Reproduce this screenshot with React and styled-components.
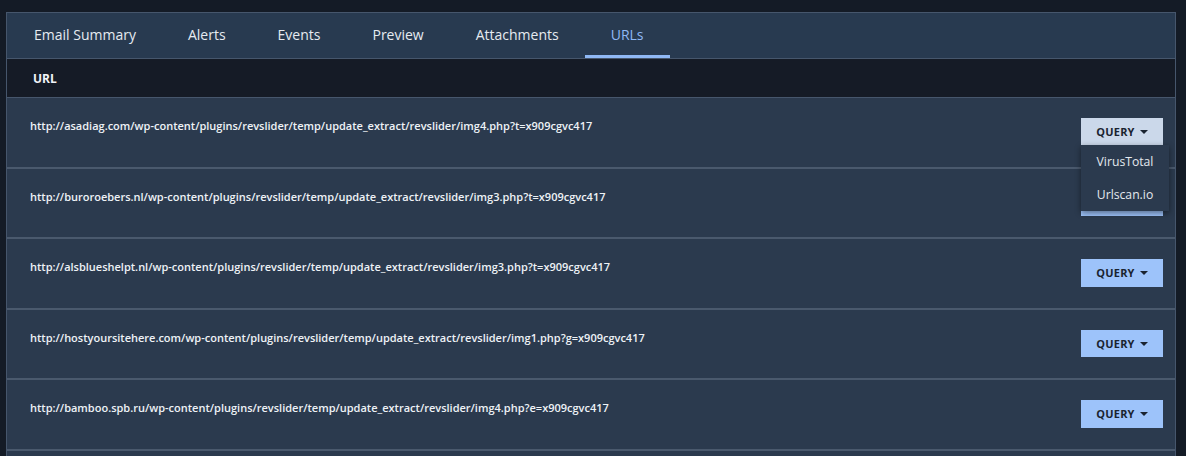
import React from "react";
import { createGlobalStyle, styled } from "styled-components";

const GlobalStyle = createGlobalStyle`
  html, body {
    margin: 0;
    padding: 0;
    background: #141b26;
    font-family: "Open Sans", "Liberation Sans", sans-serif;
    overflow: hidden;
  }
`;

const Page = styled.div`
  padding: 12px 10px 0 6px;
  height: 456px;
  box-sizing: border-box;
`;

const Panel = styled.div`
  border: 1px solid #46566c;
  border-bottom: none;
  background: #2b3a4e;
`;

const TabBar = styled.div`
  display: flex;
  height: 45px;
  padding-left: 1px;
  background: #283a50;
  border-bottom: 1px solid #46566c;
`;

const Tab = styled.div`
  padding: 0 26px;
  display: flex;
  align-items: center;
  font-size: 14px;
  color: ${({ $active }) => ($active ? "#8fb8f5" : "#e6ebf1")};
  border-bottom: 3px solid ${({ $active }) => ($active ? "#8fb8f5" : "transparent")};
  padding-top: 1px;
  box-sizing: border-box;
  height: 45px;
`;

const HeaderRow = styled.div`
  height: 38px;
  display: flex;
  align-items: center;
  padding-left: 26px;
  background: #151b26;
  border-bottom: 1px solid #46566c;
  font-size: 12px;
  font-weight: 700;
  color: #f1f4f8;
`;

const Row = styled.div`
  position: relative;
  height: 68.5px;
  display: flex;
  align-items: flex-start;
  justify-content: space-between;
  padding: 0 12px 0 23px;
  border-bottom: 2px solid #4a596d;
`;

const UrlText = styled.div`
  font-size: 11px;
  font-weight: 600;
  color: #eef2f6;
  padding-top: 20px;
`;

const QueryButton = styled.div`
  margin-top: 20px;
  width: 82px;
  height: 27.5px;
  display: flex;
  align-items: center;
  justify-content: center;
  gap: 5px;
  background: ${({ $open }) => ($open ? "#cbd8ea" : "#9dc3fa")};
  color: #1a2330;
  font-size: 11px;
  font-weight: 700;
  letter-spacing: 0.2px;
`;

const Caret = styled.span`
  width: 0;
  height: 0;
  border-left: 4px solid transparent;
  border-right: 4px solid transparent;
  border-top: 4px solid #1a2330;
  margin-top: 1px;
`;

const Menu = styled.div`
  position: absolute;
  top: 47px;
  right: 6px;
  width: 88px;
  background: #2b3a4e;
  box-shadow: 0 2px 6px rgba(0, 0, 0, 0.45);
  z-index: 2;
`;

const MenuItem = styled.div`
  height: 33px;
  display: flex;
  align-items: center;
  justify-content: center;
  font-size: 12.2px;
  color: #e4e9ef;
`;

const tabs = ["Email Summary", "Alerts", "Events", "Preview", "Attachments", "URLs"];

const urls = [
  "http://asadiag.com/wp-content/plugins/revslider/temp/update_extract/revslider/img4.php?t=x909cgvc417",
  "http://buroroebers.nl/wp-content/plugins/revslider/temp/update_extract/revslider/img3.php?t=x909cgvc417",
  "http://alsblueshelpt.nl/wp-content/plugins/revslider/temp/update_extract/revslider/img3.php?t=x909cgvc417",
  "http://hostyoursitehere.com/wp-content/plugins/revslider/temp/update_extract/revslider/img1.php?g=x909cgvc417",
  "http://bamboo.spb.ru/wp-content/plugins/revslider/temp/update_extract/revslider/img4.php?e=x909cgvc417",
  "",
];

const App = () => {
  return (
    <>
      <GlobalStyle />
      <Page>
        <Panel>
          <TabBar>
            {tabs.map((t) => (
              <Tab key={t} $active={t === "URLs"}>
                {t}
              </Tab>
            ))}
          </TabBar>
          <HeaderRow>URL</HeaderRow>
          {urls.map((u, idx) => (
            <Row key={idx}>
              <UrlText>{u}</UrlText>
              {u && (
                <QueryButton $open={idx === 0}>
                  QUERY <Caret />
                </QueryButton>
              )}
              {idx === 0 && (
                <Menu>
                  <MenuItem>VirusTotal</MenuItem>
                  <MenuItem>Urlscan.io</MenuItem>
                </Menu>
              )}
            </Row>
          ))}
        </Panel>
      </Page>
    </>
  );
};

export default App;
